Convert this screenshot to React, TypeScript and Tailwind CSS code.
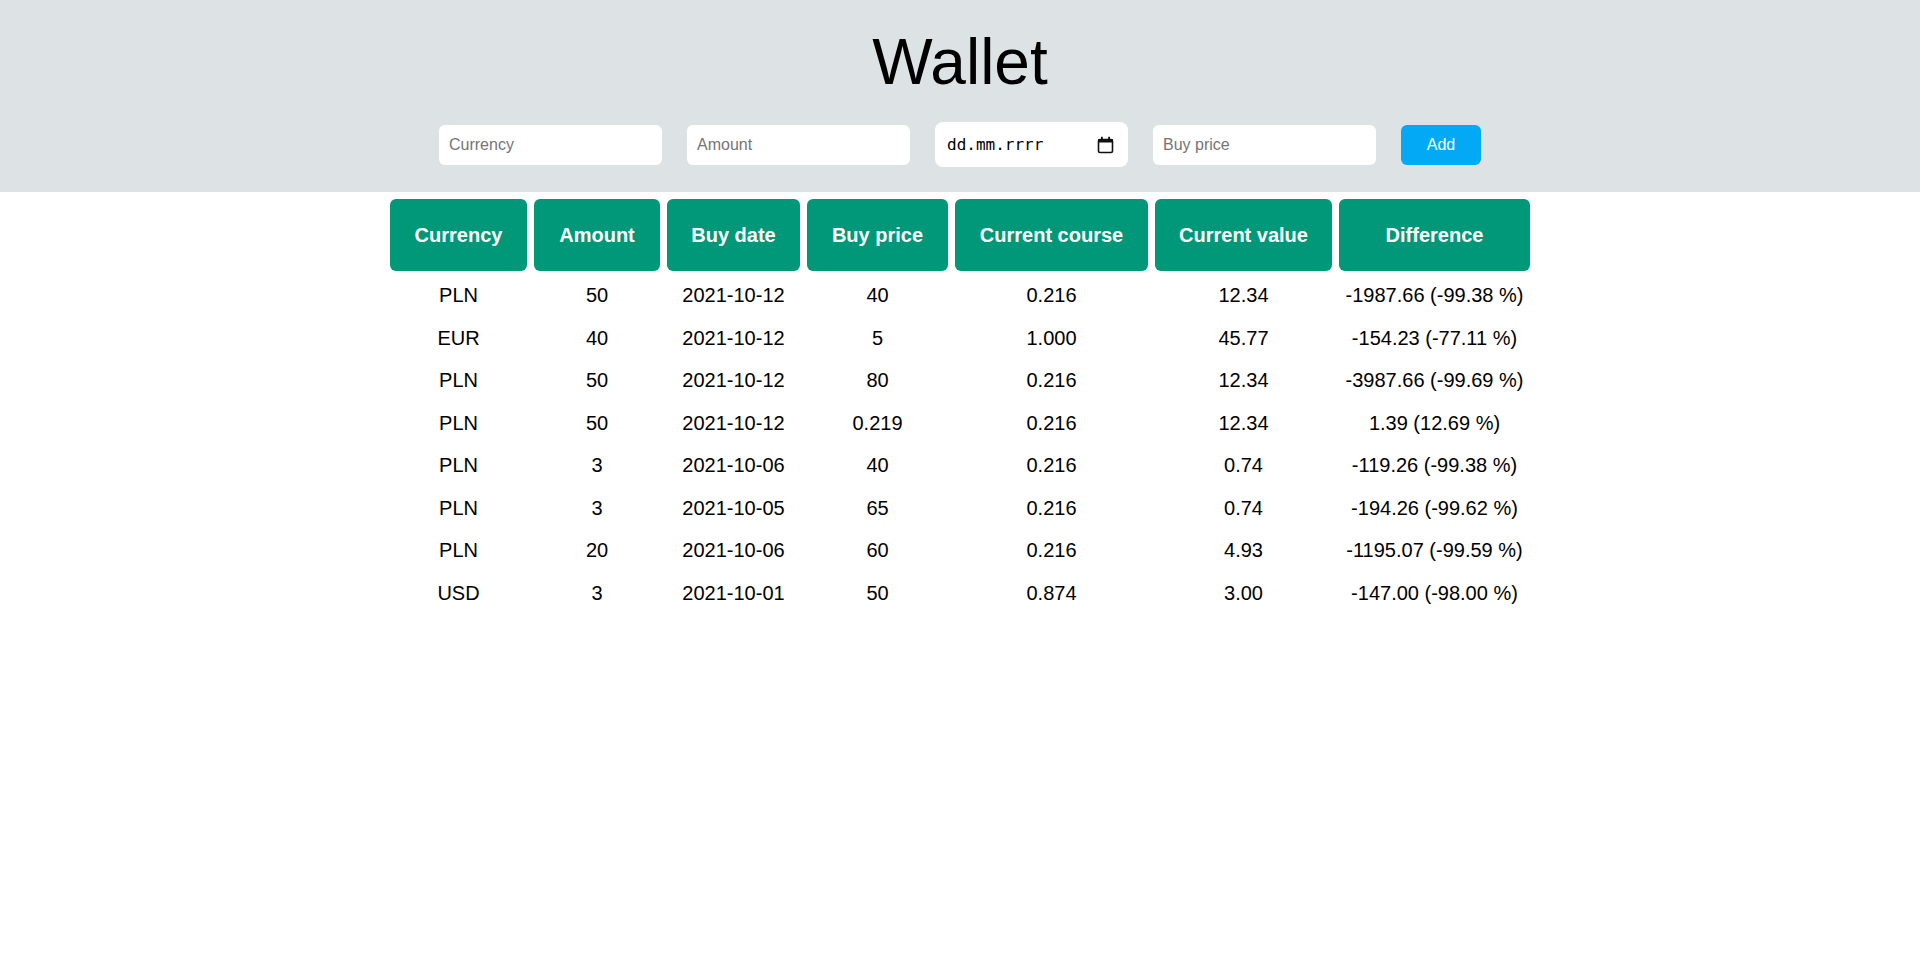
import { useState } from 'react';

type Entry = {
    currency: string;
    amount: string;
    date: string;
    price: string;
    course: string;
    value: string;
    diff: string;
};

const entries: Entry[] = [
    { currency: 'PLN', amount: '50', date: '2021-10-12', price: '40', course: '0.216', value: '12.34', diff: '-1987.66 (-99.38 %)' },
    { currency: 'EUR', amount: '40', date: '2021-10-12', price: '5', course: '1.000', value: '45.77', diff: '-154.23 (-77.11 %)' },
    { currency: 'PLN', amount: '50', date: '2021-10-12', price: '80', course: '0.216', value: '12.34', diff: '-3987.66 (-99.69 %)' },
    { currency: 'PLN', amount: '50', date: '2021-10-12', price: '0.219', course: '0.216', value: '12.34', diff: '1.39 (12.69 %)' },
    { currency: 'PLN', amount: '3', date: '2021-10-06', price: '40', course: '0.216', value: '0.74', diff: '-119.26 (-99.38 %)' },
    { currency: 'PLN', amount: '3', date: '2021-10-05', price: '65', course: '0.216', value: '0.74', diff: '-194.26 (-99.62 %)' },
    { currency: 'PLN', amount: '20', date: '2021-10-06', price: '60', course: '0.216', value: '4.93', diff: '-1195.07 (-99.59 %)' },
    { currency: 'USD', amount: '3', date: '2021-10-01', price: '50', course: '0.874', value: '3.00', diff: '-147.00 (-98.00 %)' },
];

const inputCls =
    'h-[40px] w-[223px] rounded-md bg-white px-[10px] text-[16px] text-black outline-none placeholder:text-[#757575]';

export default function App() {
    const [currency, setCurrency] = useState('');
    const [amount, setAmount] = useState('');
    const [price, setPrice] = useState('');

    return (
        <div className="min-h-screen bg-white font-['Liberation_Sans',Arial,sans-serif] text-black">
            <header className="bg-[#dde3e5] pt-[25px] pb-[25px]">
                <h1 className="text-center text-[64px] font-normal leading-[74px]">
                    Wallet
                </h1>
                <div className="mt-[23px] flex h-[45px] items-center justify-center gap-[25px]">
                    <input
                        className={inputCls}
                        placeholder="Currency"
                        value={currency}
                        onChange={(e) => setCurrency(e.target.value)}
                    />
                    <input
                        className={inputCls}
                        placeholder="Amount"
                        value={amount}
                        onChange={(e) => setAmount(e.target.value)}
                    />
                    {/* date field, drawn by hand so the locale mask stays dd.mm.rrrr */}
                    <div className="flex h-[45px] w-[193px] items-center justify-between rounded-lg bg-white pl-[12px] pr-[14px]">
                        <span className="font-['DejaVu_Sans_Mono',monospace] text-[16px] text-black">
                            dd.mm.rrrr
                        </span>
                        <svg width="17" height="18" viewBox="0 0 17 18" aria-hidden>
                            <rect x="1.5" y="3.5" width="14" height="13" rx="1.5" fill="none" stroke="#111" strokeWidth="1.6" />
                            <rect x="1" y="3" width="15" height="3.6" rx="1" fill="#111" />
                            <rect x="4" y="0.8" width="1.8" height="3" fill="#111" />
                            <rect x="11.2" y="0.8" width="1.8" height="3" fill="#111" />
                        </svg>
                    </div>
                    <input
                        className={inputCls}
                        placeholder="Buy price"
                        value={price}
                        onChange={(e) => setPrice(e.target.value)}
                    />
                    <button
                        type="button"
                        className="h-[40px] w-[80px] rounded-md bg-[#03a9f4] text-[16px] text-white"
                    >
                        Add
                    </button>
                </div>
            </header>

            <table className="mx-auto table-fixed border-separate border-spacing-[7.5px] text-[20px]">
                <thead>
                    <tr>
                        <th className="w-[137px] rounded-md bg-[#009879] py-[24.5px] text-center font-bold leading-[23px] text-white">Currency</th>
                        <th className="w-[126px] rounded-md bg-[#009879] py-[24.5px] text-center font-bold leading-[23px] text-white">Amount</th>
                        <th className="w-[133px] rounded-md bg-[#009879] py-[24.5px] text-center font-bold leading-[23px] text-white">Buy date</th>
                        <th className="w-[141px] rounded-md bg-[#009879] py-[24.5px] text-center font-bold leading-[23px] text-white">Buy price</th>
                        <th className="w-[193px] rounded-md bg-[#009879] py-[24.5px] text-center font-bold leading-[23px] text-white">Current course</th>
                        <th className="w-[177px] rounded-md bg-[#009879] py-[24.5px] text-center font-bold leading-[23px] text-white">Current value</th>
                        <th className="w-[191px] rounded-md bg-[#009879] py-[24.5px] text-center font-bold leading-[23px] text-white">Difference</th>
                    </tr>
                </thead>
                <tbody>
                    {entries.map((e, i) => (
                        <tr key={i} className="text-center leading-[23px]">
                            <td className="py-[6.25px]">{e.currency}</td>
                            <td className="py-[6.25px]">{e.amount}</td>
                            <td className="py-[6.25px]">{e.date}</td>
                            <td className="py-[6.25px]">{e.price}</td>
                            <td className="py-[6.25px]">{e.course}</td>
                            <td className="py-[6.25px]">{e.value}</td>
                            <td className="whitespace-nowrap py-[6.25px]">{e.diff}</td>
                        </tr>
                    ))}
                </tbody>
            </table>
        </div>
    );
}
